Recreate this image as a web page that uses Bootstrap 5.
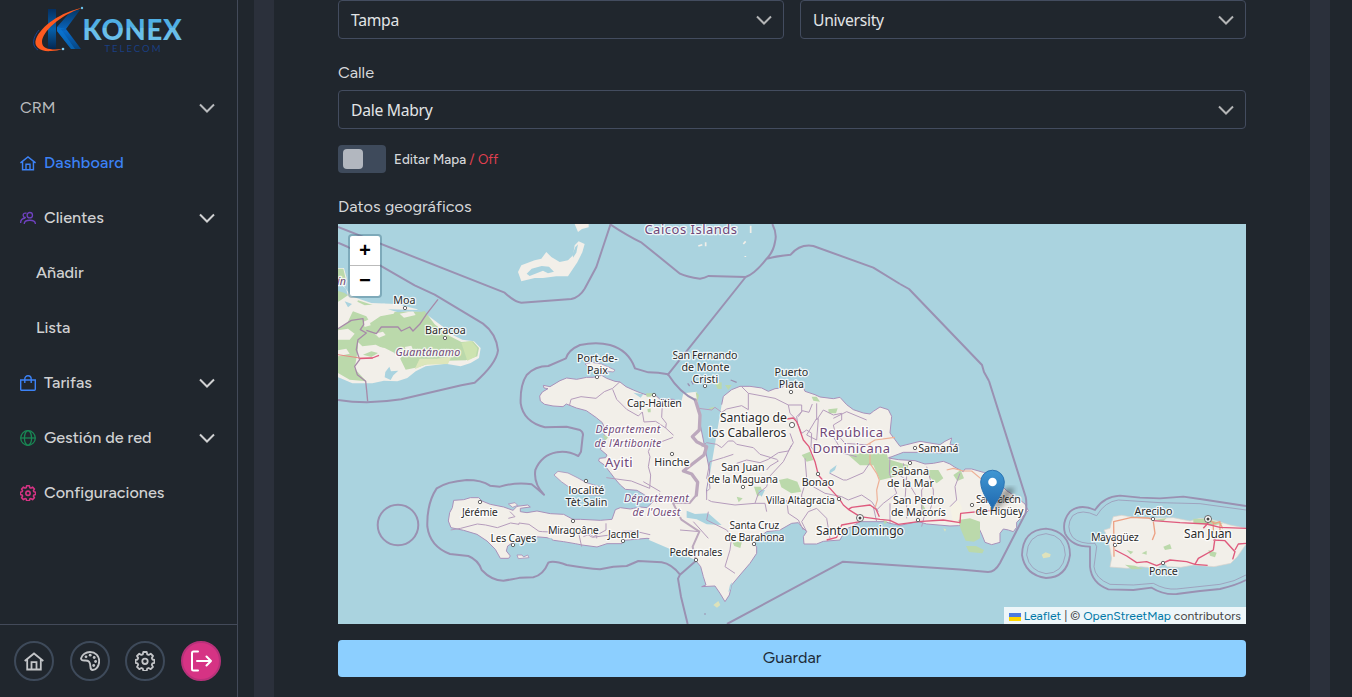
<!DOCTYPE html>
<html lang="es" data-bs-theme="dark">
<head>
<meta charset="utf-8">
<meta name="viewport" content="width=device-width, initial-scale=1">
<title>Konex Telecom</title>
<link href="https://cdn.jsdelivr.net/npm/bootstrap@5.3.0/dist/css/bootstrap.min.css" rel="stylesheet">
<style>
body{background:#20262d;color:#d5d7da;font-family:Figtree,Inter,sans-serif;font-size:16px;height:697px;overflow:hidden}
.side{width:238px;border-right:1px solid #434a59}
.brand-box{height:80px}
.side .nav-link{height:55px;padding:1px 22px 0 20px;color:#d0d1d2;font-weight:500;gap:8px;font-size:16.2px}
.side .nav-link svg{margin-top:-1px}
.side .nav-link.active{color:#3c82f6;letter-spacing:.16px}
.side .sub{padding-left:36px}
.side .title-link{font-weight:400;color:#b9bbbe}
.chev{width:16px;height:10px}
.foot{height:73px;border-top:1px solid #434a59;padding:0 16px 0 14px}
.rbtn{width:40px;height:40px;border:2px solid #3e4a5a;color:#c3c5c8}
.rbtn.out{background:#d63384;border-color:#b8317a;color:#fff}
.gutter{background:#2b303b;width:20px}
.panel{width:1036px;padding:0 64px}
.fsel{height:39px;background:transparent;border:1px solid #434c5f;border-radius:4px;padding:0 11px 0 12px;font:15.7px "Noto Sans",sans-serif;color:#e2e4e6;letter-spacing:-.3px}
.flabel{line-height:24px;height:24px;font-size:16.3px;margin-top:22px;margin-bottom:5px}
.tog{width:48px;height:28px;border-radius:4px;background:#3e4a5b;padding:4px 5px}
.tog span{display:block;width:20px;height:20px;border-radius:4px;background:#b2b7bf}
.togtxt{font-size:13.4px;font-weight:500;padding-top:1px}
.off{color:#e04050;font-weight:400}
.map{height:400px;background:#aad3df;position:relative;overflow:hidden}
.zoomer{position:absolute;left:10px;top:10px;border:2px solid rgba(60,110,130,.4);background-clip:padding-box!important;border-radius:4px;background:#fff;color:#000;width:34px;height:64px;font:bold 20px/32px "Liberation Mono",monospace;text-align:center}
.zoomer div{height:30px}.zoomer div:first-child{border-bottom:1px solid #bbb}
.attr{position:absolute;right:0;bottom:0;height:17px;line-height:17px;background:rgba(255,255,255,.8);padding:0 5px;font-size:12.15px;color:#444;white-space:nowrap}
.attr span{color:#0078a8}
.attr svg{margin-right:3px}
.save{height:37px;background:#8ccfff;border-radius:4px;color:#1d2b38;font-size:16.2px}
.lb text{font-family:"Noto Sans",sans-serif;font-size:10.7px;fill:#2b2b2b;stroke:#fff;stroke-opacity:.8;stroke-width:2.6px;paint-order:stroke;stroke-linejoin:round;text-anchor:middle}
.lb .md{font-size:12.2px}.lb .st{fill:#714b78;font-style:italic}.lb .ct{fill:#6f4878;font-size:13px;letter-spacing:.3px}
</style>
</head>
<body>
<div class="d-flex h-100">
<aside class="side d-flex flex-column flex-shrink-0">
  <div class="brand-box flex-shrink-0">
    <svg width="237" height="80" viewBox="0 0 237 80">
      <defs>
        <linearGradient id="ka" x1="0" y1="0" x2="0" y2="1"><stop offset="0" stop-color="#052f60"/><stop offset=".5" stop-color="#0761aa"/><stop offset="1" stop-color="#05264f"/></linearGradient>
        <linearGradient id="kb" x1="0" y1="0" x2="0" y2="1"><stop offset="0" stop-color="#063765"/><stop offset=".55" stop-color="#0969c6"/><stop offset="1" stop-color="#064682"/></linearGradient>
        <linearGradient id="kc" x1="0" y1="0" x2="0" y2="1"><stop offset=".5" stop-color="#50afe4"/><stop offset=".5" stop-color="#69bfe9"/></linearGradient>
      </defs>
      <path d="M48 9h8v40h-8z" fill="url(#ka)"/>
      <path d="M72 10h8L66 29l15 20H71L57 31v-4z" fill="url(#kb)"/>
      <path d="M66 29 57 27v4l14 18h4L61 29z" fill="#0a7bd8" opacity=".5"/>
      <path d="M82 8C61 12 41 26 36 39c-3 8 5 13 15 12 4 0 8-1 12-2-10 1-21 1-21-7 0-10 18-27 40-34z" fill="#ff5a20"/>
      <path d="M39 30c-6 7-8 16-1 20" fill="none" stroke="#164393"/>
      <circle cx="82" cy="8" r="1.2" fill="#69bfe9"/><circle cx="63" cy="49" r="1.3" fill="#7fd0f5"/>
      <text x="82.500" y="39.500" textLength="100" lengthAdjust="spacingAndGlyphs" font-family="Lato" font-weight="900" font-size="28" letter-spacing=".8" fill="url(#kc)">KONEX</text>
      <text x="104.500" y="52" textLength="56" font-family="Lato" font-size="9.500" fill="#1a3f82">TELECOM</text>
    </svg>
  </div>
  <nav class="nav flex-column flex-nowrap flex-grow-1">
    <a class="nav-link title-link d-flex align-items-center">CRM<svg class="chev ms-auto" viewBox="0 0 16 10" fill="none" stroke="currentColor" stroke-width="2"><path d="m1 1.500 7 7 7-7"/></svg></a>
    <a class="nav-link active d-flex align-items-center"><svg width="16" height="16" viewBox="0 0 20 20" fill="none" stroke="currentColor" stroke-width="1.800"><path d="M.5 9.800 10 2.300l9.500 7.500M3.200 8v10.500h13.600V8M7.500 18.500v-7h5v7"/></svg>Dashboard</a>
    <a class="nav-link d-flex align-items-center"><svg width="16" height="16" viewBox="0 0 16 16" fill="none" stroke="#6f42c1" stroke-width="1.300"><circle cx="9.800" cy="5.200" r="2.700"/><path d="M4.200 14c0-5 11.200-5 11.200 0M6.500 3.400a2.200 2.200 0 1 0-.6 4M.6 13c0-3 1.400-4.600 4.600-5"/></svg>Clientes<svg class="chev ms-auto" viewBox="0 0 16 10" fill="none" stroke="currentColor" stroke-width="2"><path d="m1 1.500 7 7 7-7"/></svg></a>
    <a class="nav-link sub d-flex align-items-center">Añadir</a>
    <a class="nav-link sub d-flex align-items-center">Lista</a>
    <a class="nav-link d-flex align-items-center"><svg width="16" height="16" viewBox="0 0 16 16" fill="none" stroke="#3c82f6" stroke-width="1.400"><path d="M.7 5h14.600v9.200q0 1.100-1 1.100H1.700q-1 0-1-1.100zM4.800 8V4a3.200 3.200 0 0 1 6.400 0v4"/></svg>Tarifas<svg class="chev ms-auto" viewBox="0 0 16 10" fill="none" stroke="currentColor" stroke-width="2"><path d="m1 1.500 7 7 7-7"/></svg></a>
    <a class="nav-link d-flex align-items-center"><svg width="16" height="16" viewBox="0 0 16 16" fill="none" stroke="#198754" stroke-width="1.300"><circle cx="8" cy="8" r="7.300"/><ellipse cx="8" cy="8" rx="3.600" ry="7.300"/><path d="M.7 8h14.600"/></svg>Gestión de red<svg class="chev ms-auto" viewBox="0 0 16 10" fill="none" stroke="currentColor" stroke-width="2"><path d="m1 1.500 7 7 7-7"/></svg></a>
    <a class="nav-link d-flex align-items-center"><svg width="16" height="16" viewBox="0 0 20 20" fill="none" stroke="#d63384" stroke-width="2"><path id="gear" stroke-linejoin="round" d="M8.300 1h3.400l.5 2.300 1.500.6 2-1.200 2.300 2.300-1.200 2 .6 1.500 2.100.5v2.800l-2.100.6-.6 1.500 1.200 2-2.300 2.300-2-1.200-1.500.6-.5 2.200H8.300l-.5-2.200-1.500-.6-2 1.200L2 15.900l1.200-2-.6-1.500-2.100-.6V9l2.100-.5L3.200 7 2 5l2.300-2.300 2 1.200 1.500-.6z"/><circle cx="10" cy="10.300" r="2.700"/></svg>Configuraciones</a>
  </nav>
  <div class="foot d-flex align-items-center justify-content-between">
    <span class="rbtn rounded-circle d-flex align-items-center justify-content-center"><svg width="20" height="20" viewBox="0 0 20 20" fill="none" stroke="currentColor" stroke-width="1.800"><path d="M.7 10 10 2.500l9.300 7.500M3.200 8.500v10h13.600v-10M7.500 18.500v-7.300h5v7.300"/></svg></span>
    <span class="rbtn rounded-circle d-flex align-items-center justify-content-center"><svg width="20" height="20" viewBox="0 0 20 20" fill="none" stroke="currentColor" stroke-width="1.900"><path d="M1 7.500C2 3.500 6 1 10 1c5.500 0 9.200 4 9.200 9 0 5-3 9-6.500 9-4 0-.8-5-3.700-8.300C6.500 7.900 1.500 11.500 1 7.500z"/><g fill="currentColor" stroke="none"><circle cx="6" cy="5.800" r="1.400"/><circle cx="10.200" cy="4.200" r="1.400"/><circle cx="14.200" cy="6.500" r="1.400"/><circle cx="15.600" cy="10.500" r="1.400"/><circle cx="13.700" cy="14.500" r="1.400"/></g></svg></span>
    <span class="rbtn rounded-circle d-flex align-items-center justify-content-center"><svg width="20" height="20" viewBox="0 0 20 20" fill="none" stroke="currentColor" stroke-width="1.800"><use href="#gear"/><circle cx="10" cy="10.300" r="2.700"/></svg></span>
    <span class="rbtn out rounded-circle d-flex align-items-center justify-content-center"><svg width="22" height="22" viewBox="0 0 22 22" fill="none" stroke="currentColor" stroke-width="2" stroke-linecap="round" stroke-linejoin="round"><path d="M8 1.500H3.500q-1.500 0-1.500 1.500v16q0 1.500 1.500 1.500H8M7 11h14m-4.500-4.500L21 11l-4.500 4.500"/></svg></span>
  </div>
</aside>
<main class="d-flex flex-grow-1 ps-3">
  <div class="gutter flex-shrink-0"></div>
  <section class="panel flex-shrink-0">
    <div class="d-flex gap-3">
      <div class="fsel flex-fill w-50 d-flex align-items-center">Tampa<svg class="chev ms-auto" viewBox="0 0 16 10" fill="none" stroke="#b4b5b6" stroke-width="2"><path d="m1 1.500 7 7 7-7"/></svg></div>
      <div class="fsel flex-fill w-50 d-flex align-items-center">University<svg class="chev ms-auto" viewBox="0 0 16 10" fill="none" stroke="#b4b5b6" stroke-width="2"><path d="m1 1.500 7 7 7-7"/></svg></div>
    </div>
    <div class="flabel">Calle</div>
    <div class="fsel d-flex align-items-center">Dale Mabry<svg class="chev ms-auto" viewBox="0 0 16 10" fill="none" stroke="#b4b5b6" stroke-width="2"><path d="m1 1.500 7 7 7-7"/></svg></div>
    <div class="d-flex align-items-center gap-2 mt-3"><div class="tog"><span></span></div><div class="togtxt">Editar Mapa <span class="off">/ Off</span></div></div>
    <div class="flabel">Datos geográficos</div>
    <div class="map">
<svg class="d-block" width="908" height="400" viewBox="338 224 908 400" fill="none" stroke-linejoin="round">
<defs><linearGradient id="pin" x1="0" y1="0" x2="0" y2="1"><stop offset="0" stop-color="#3f97d3"/><stop offset="1" stop-color="#2068ae"/></linearGradient><filter id="soft"><feGaussianBlur stdDeviation="2.500"/></filter></defs>
<!-- eastern Cuba and Inagua -->
<g transform="translate(338 222) scale(.33333)">
 <path fill="#f2efe9" d="M0 138l18 0 8 30-8 25 22 30 60 20 75 3 60 15 38 22 40 30 30 25 30 15 35 5 20 20-5 30-25 15-30 10-45-8-60 8-30 15-25 20-30 10-40-2-35 8-60 0-35-15-38-15z"/>
 <path fill="#bbd9ab" d="M0 140l16 0 8 35-14 20 20 25-30 20zM60 235l110 35 90-3 30 40 45 35 35 18 35-2 18 20-5 25-35 12-90 2-50 18-40 8-20-40-70-35-40 5-20-20-55 10 0-40 30-20zM0 330l60 0 0 50-10 60 35 38-50-5-35-20z"/>
 <path fill="#cde3b0" d="M370 362l30-5 18 22-5 25-25 12z"/>
 <g fill="#f2efe9"><path d="M0 240l35-12 45 22 60-5 35 15-8 15-40 8-30 20-12-20-40-15-45 15zM75 300l18-8 5 18-18 5zM0 325l30-5 20 15-15 18-35 0zM185 275l40-8 8 12-35 8zM170 395l22-10 5 14-20 20zM110 335l25-6 8 10-20 8zM0 385l25-5 10 15-35 8zM200 375l20-4 4 9-20 4z"/><path d="M65 385l45-12 30 5 30 15-12 40-20 20-30 5-35-10-12-25z"/></g>
 <path fill="#dde6bb" d="M245 410l50 0 45-6-10 22-70 2-30 14z"/>
 <path fill="#bbd9ab" d="M75 398l25-10 20 5-20 12z"/>
 <path fill="#aad3df" d="M142 450l12-16 5 14 22-2-15 14-8 14-18-8zM0 180l24 20 6 20-12-8-18-5zM20 238l22 8-12 10zM150 262l90 2 20 6-50-2-30 3z"/>
 <path stroke="#a78aa8" stroke-width="4" d="M0 320l40-25 35-5 2 18-10 15 18 10-25 20-5 30 10 30-15 20 8 25 25 20 3 28 3 32M85 325l30 10 15-20 50 0 10 12 25-12 10 12 20-20 20-30 35-45"/>
 <path stroke="#e78b85" stroke-width="3" d="M0 398l65 10 40 0"/><path stroke="#df5a7d" stroke-width="4" d="M65 410l38-2 20-8"/>
 <path fill="#f2efe9" d="M540 150l10-20 40-15 20-5 15-20 15 15 25 15 25-5 15-15 5-30 12-12 18 8-7 25-15 30-28 42-35 0-40 5-25 0-40 10zM710 6l42 0 0 10-20 5-12 9z"/>
 <path fill="#aad3df" d="M566 155l15-15 30-8 22 2 15 15-18 5-15-8-40 16zM704 95l8-20 8-8-5 25-10 15z"/>
 <g stroke="#9a91b2" stroke-width="6"><path d="M0 15l500 197Q530 240 550 242l150-11Q725 225 740 200l35-65 15-45 28-84M0 62l30 13 200 115 60 28 145 87Q475 335 480 385 475 425 410 482l-40 8-180 42Q90 548 0 534"/></g>
</g>
<g transform="translate(600 222) scale(.33333)"><path stroke="#f2efe9" stroke-width="5" d="M295 72l12-4m10 5l0-12m113 5l7-8m15-25l0-22m-103 5l10-3m77 92l0-3"/></g>
<!-- Haiti -->
<g transform="translate(420 340) scale(.33333)">
 <path fill="#f2efe9" stroke="#a991ba" stroke-width="3" d="M826 182l-26-4-15 17-25-17-40 0-14-13-26 0-20-7-20-8-22-10-18-14-15-2-25-9-15-9-25 6-20 0-30 6-30-4-20 8-30 18-20-4 2 8 12 2-17 10-8 12 2 15 13 10 25 5 30 2 10-8 10 4 20 8 30 8 30 21 18 15 8 20-3 15 7 10-10 15-8 20 20 17-4 8-19 2-2 8 17 12 18 23 15 20 15 17 15 13 35 3 20 12 20 15 10 5-20 20-20-2-20 4-10 2-30-4-15 6-10 29-35 3-40-2-20-1-22 0-28-15-40-2-40-8-30 5-20-3 0-10 30-4-8-6-32 4-12 12-28-10-40-8-25-10-10-10-25 0-20 6-30 2-4 22-8 15-4 25 8 20 38 8 40 12 30 20 25 25 15 27 25 0 5-7-12-15 4-15 23-15 25-10 35-3 35 3 20 8 30 4 35 6 20 4 45 6 30-10 45 0 5-10 70-6 60 6 40 14 48 28 40-250z"/>
 <path fill="#f2efe9" stroke="#a991ba" stroke-width="2.500" d="M402 405l12-11 30 5 30 15 25 14 40 12 0 25-30 0-50-15-35-25zM495 72l20-5 30 5 40 18-5 6-40-5-35-10zM265 492l20-4 8 8-15 6zM291 645l15 0 5 6 12-6 4 8-32 3z"/>
 <g stroke="#b59cbc" stroke-width="3"><path d="M448 198l5-20 30-8 45 5 25-20 25-10 22-20M578 148l12 30 30 30 35 20 12-12 5 30 35-2 30 20M735 180l-8 12-2 40 14 18-2 14 28 26-40 15-30 5-10 25 5 15-5 30 7 25-3 40-55-22-75-10M765 290l60 15M670 425l60 35 60-2 35 25M92 570l30-5 50-13 25 3 35 8 40-14 25 4 0-4 30 4 30 21 10 1 130 5 20 12 60-8 30-10 40 0 60 14 40-5 60 3M270 515l15 15-20 5M475 575l10 45M490 590l20-8 10 8 20-10 18-10 0-20M530 565l0 30M720 460l-10 30"/></g>
 <path fill="#aad3df" d="M748 412l15-3 5 10 22-5-10 12-20-5zM375 608l8-12 14-2-5 12zM738 490l20 0 20 12-20 3zM640 158l30 5-8 10z"/>
 <path fill="#bbd9ab" d="M678 160l22 0-8 10-12 0zM548 285l18 5-10 12zM800 555l22-5 0 12-12 4zM682 208l10-3 0 12-8 0z"/>
</g>
<!-- Dominican Republic -->
<g transform="translate(660 340) scale(.33333)">
 <path fill="#f2efe9" stroke="none" d="M70 160l40-5 35 380-38 125-140-60z"/>
 <path fill="#f2efe9" stroke="#a991ba" stroke-width="3" d="M106 660l16 20 8 30 8 25-13 5 40-2 15 22 15 25 13-20 7-30 25-30 30-35 20-30 0-20-10-8 20-22 20-15 40-5 35-20 20-2 10 12 15 15-10 15 2 22 38 0 20-8 50-4 8-15 4-15 23-10 25-15 75 0 15 5 30 6 55-11 25 7 70 6 25-1 35-2 20 2 8 10 7 15 10 25 20 7 25-7 0-27 10-13 15 3 15 5 10-13 0-15 15-15 20-20-10-20-25-20-30-20-20-20-20-25-30-10-35-10-20 0-5 8-25-13-15-10-20-8-30 6-25 2-30-10-50-3-30-5 45-17 80 0 35 2 15-5 20-5 15-15-25 0 5-20-20 10-15 10-60-10-60 15-15-20-15-20 5-50-10-20-25-8-20 13-10 8-20-3-30-10-20-15-20-22-20 4-40-5-15-7-30-10-5-12-35-10-20 0-10 12-20 2-20 8-20-10-35-5-30 0-25 10-25 20-5 25"/>
 <path fill="#f5f2e5" d="M870 500l25-20 10 20 5 50-30 0z"/>
 <g fill="#bbd9ab"><path d="M565 345l35-5 80 0 5 18 60 18-5 20-40 15-40 10-20-45-40 0zM357 420l25-5 30 10 12 30-30 5-30-18zM425 345l25-10 10 25-20 5zM165 130l20-3 0 20-12 0zM195 135l20 0-10 15zM455 170l15 0 10 15-20-3zM505 208l28-3-5 15-22 0zM282 440l20 0 8 20-18 10zM218 608l28-4-5 20-18-6zM805 390l30 0 15 25-20 15-22-20zM880 405l22-15 10 25-20 8zM895 540l35-5 30 10 0 50-18 10-25-3-15-35zM918 618l30 0 24 12-5 10-40-4zM230 470l18 5-12 12zM107 155l10 10-5 22zM780 480l18 30-10 10zM670 540l12 5-8 8zM145 205l18-5-5 10z"/></g>
 <path fill="#aad3df" d="M80 512l25 10 40-2 40 35-45-2-30-15-30-5zM510 390l20-15-5 15-18 12zM295 450l20 0-10 20-8-8zM210 735l6-8-3 20-8 10z"/>
 <path fill="#dde2ba" d="M160 795l15-12 6 12-10 8zM850 565l8 3-3 7z"/><path stroke="#9a8faf" stroke-width="4" d="M133 822l4 0M83 130l6 8m5-15l6 10m112-13l18 7"/>
 <g stroke="#b59cbc" stroke-width="3"><path d="M115 205l40 5 10-8 20 15 15-10 45-10 20 12 0-49M245 140l20 20 80 15 40 20 40 0 0 20-15 15 3 20 12 30 15-10 15 10-2 40 15 20M125 320l15-12 30 5 15 10 20-20 15 0 10 10 50 10 20 20 50 15 5 5-25 15-10 12M140 480l0-25 10-10-2-20-8-10 10-50 40-12 30-10M145 480l10 5 70 10 60-5 30 0 5 25M230 370l30-10 40 8 25-10 30-20 30-5 15-25-10-28M285 490l10-30 25-20 8-30 42-45 25-50M385 195l5 25 20 20M415 230l12-18 20 5 10-25M470 190l0 50 20-30 30 15 25-5M470 235l-30 50 30 15 5-65M545 220l0 20-25 15 5 20 30 35 70 5M435 355l5 60 0 25M440 415l-15 50 0 12M460 440l35 20 50 10 20 10 40-15 30 20 20 30M510 400l40 20 10 0 50-22 20-30M520 290l30 50 40 10M690 350l-2 50 22 60-40 30-20 20M730 370l10 40-5 70 5 15 0 40M710 400l30 20 30 50M820 480l-10 30-15 10-10 40M800 380l20 70 0 30M900 400l-15 40 5 40-20 20M145 515l-5 25 60 30 15 20-5 40-15 50 30 20M100 545l45 50M380 480l5 40 30 20 15 30M470 505l-25 10-20 30 15 30M470 505l30 30 10 60M420 475l30 30M60 570l60 5M785 520l0-70 20-30M620 240l-60-25-40 20M640 500l10 45M690 490l0 60"/></g>
 <g stroke="#bca8bd" stroke-linecap="round"><path stroke-width="10" d="M106 180l14 45-2 45-21 20 13 15 30 15-8 25-62 48 25 9 18 25-4 38"/><path stroke-width="6" d="M109 465l-20 24-50 0 10 20 15 30 54 36-20 45 8 35"/></g>
 <g stroke="#eeb096" stroke-width="3.500"><path d="M630 310l0 60 20 30 8 20-8 30 2 30-7 25M620 315l25-15 60-8M860 390l20-5 30 8 25 0 30 25 18 40"/></g>
 <g stroke="#df5a7d" stroke-width="4"><path d="M380 237L400 234 410 245 415 257 430 300 447 320 465 365 475 405 505 440 537 475 550 495 565 508 600 530 660 538 690 541 715 553 775 545 850 540 900 548 902 520 1005 510M565 508L575 502 630 495 648 508 658 530M500 600L530 592 545 555 600 545"/></g>
</g>
<!-- Puerto Rico, Mona -->
<g transform="translate(880 400) scale(.33333)">
 <path fill="#f2efe9" stroke="#ddd3cc" stroke-width="2" d="M700 350l25-4 35 6 40 3 80-2 50 10 30-8 40 5 50 15 50 10 0 45-28 40-20 20-50 10-60-5-40 7-40-2-10-10-20 15-50-5-40 5-52-4 5-26-5-30-10-40-8-15 18-5 5-20z"/>
 <path fill="#bbd9ab" d="M735 494l30 3 25 10-35 1zM850 440l20-8 5 14-20 4zM985 450l25 8-5 14-15-5zM940 356l40 0 50 15-30 5-60-8zM740 450l20 5-8 8zM820 360l40-6-10 10zM785 460l15-8 0 12z"/><path fill="#dfe2bb" d="M485 464l12-7 15 6-2 8-20 4z"/>
 <path stroke="#eda184" stroke-width="4" d="M702 470L701 365 730 358 755 352 805 354 820 359M820 365l5 35-8 20M985 360l20 10 15-5 0 30M1000 365l0 35M1018 365l10 20"/>
 <path stroke="#df5a7d" stroke-width="4.200" d="M820 362L900 368 980 372 1020 382 1098 385M970 385l15-17M705 450L740 468 770 488 800 485 830 497 870 480 920 485 945 493 983 496M945 493L955 475 1000 450 1005 415M1000 420L1035 422 1065 455 1058 478M1065 450L1075 432 1098 430"/>
 <g stroke="#9a91b2" stroke-width="5.500"><path d="M1098 318L960 297 910 290 840 295 780 293 720 287Q670 290 645 330 600 310 570 335 545 365 555 400 575 440 630 440V500Q635 550 685 568L760 570 815 563Q850 585 890 582L960 573 1020 567Q1070 555 1098 540"/><path d="M498 386Q570 395 570 465 560 533 498 534 435 525 426 465 428 390 498 386z"/><path stroke-width="2.200" d="M1098 330L960 311 840 308 715 300Q675 305 650 347 605 325 578 347 555 380 578 412 600 433 645 430L650 440 642 500Q645 535 690 553L760 555 820 550Q855 570 890 567L1020 553Q1065 545 1098 525"/><path stroke-width="2.200" d="M498 401Q555 407 556 465 548 520 498 521 448 513 440 465 442 405 498 401z"/></g>
</g>
<!-- maritime limits -->
<g stroke="#9a91b2" stroke-width="2">
 <g transform="translate(600 222) scale(.33333)" stroke-width="6"><path d="M32 8Q80 40 125 62L240 155Q260 165 300 170 315 168 325 162L437 165Q465 155 500 110 520 90 525 60 532 35 517 6M500 110Q530 102 572 98 600 65 640 72L820 137 900 186M437 165L202 460"/></g>
 <path d="M900 284l9 5 73 76 2 7 5 9"/>
 <path d="M989 381L995 400 1025.700 497Q1027 503 1025.700 513L1000 563Q995 572 988 572L960 569.500 843 561.700 727 624"/>
 <circle cx="398" cy="525" r="20.300"/>
 <g transform="translate(420 340) scale(.33333)" stroke-width="6"><path d="M826 180Q780 160 744 103 715 97 685 97L645 85Q625 30 570 15 530 5 480 15 445 30 438 55L385 78Q345 78 320 105 300 135 302 190 310 245 375 262L440 260 480 270Q492 278 488 290L483 335 475 348Q440 330 410 337 365 345 346 390 340 430 372 464 350 445 335 433 290 425 240 440L210 437Q185 420 140 420 80 425 50 445 20 490 22 560 30 620 90 642L145 648Q175 660 185 690 215 722 250 722 290 716 300 713L340 712Q370 705 385 668 400 660 440 675 500 685 540 688L580 680 620 678 655 663 725 667Q755 672 780 704L828 662M780 704l-6 12 9 54 20 82"/></g>
</g>
<g fill="#fff" stroke="#555" stroke-width=".9"><circle cx="405" cy="308" r="1.700"/><circle cx="445" cy="338" r="1.700"/><circle cx="597" cy="377" r="1.700"/><circle cx="654" cy="395" r="1.700"/><circle cx="705" cy="386" r="1.700"/><circle cx="791" cy="392" r="1.700"/><circle cx="792" cy="425" r="2.600"/><circle cx="672" cy="454" r="1.700"/><circle cx="586" cy="481" r="1.700"/><circle cx="480" cy="502" r="1.700"/><circle cx="573" cy="521" r="1.700"/><circle cx="513" cy="545" r="1.700"/><circle cx="623" cy="541" r="1.700"/><circle cx="696" cy="560" r="1.700"/><circle cx="754" cy="544" r="1.700"/><circle cx="743" cy="487" r="1.700"/><circle cx="818" cy="474" r="1.700"/><circle cx="839" cy="499" r="1.700"/><circle cx="915" cy="448" r="1.700"/><circle cx="910" cy="463" r="1.700"/><circle cx="918" cy="520" r="1.700"/><circle cx="972" cy="505" r="1.700"/><circle cx="1153" cy="519" r="1.700"/><circle cx="1115" cy="545" r="1.700"/><circle cx="1163" cy="563" r="1.700"/><circle cx="860" cy="518" r="3.500"/><circle cx="1208" cy="519" r="3.500"/></g>
<g fill="#444"><circle cx="860" cy="518" r="1.500"/><circle cx="1208" cy="519" r="1.500"/></g>
<g class="lb" transform="translate(.4 0)">
<text x="404" y="304">Moa</text><text x="445" y="334">Baracoa</text><text class="st" x="427.500" y="355.500" textLength="65">Guantánamo</text><text class="st" x="341" y="285">ín</text>
<text class="ct" x="690.500" y="233.500" textLength="93">Caicos Islands</text>
<text x="597" y="361.500">Port-de-</text><text x="597" y="373.500">Paix</text><text x="654" y="406.500" textLength="55">Cap-Haïtien</text>
<text x="704.500" y="358.500" textLength="65">San Fernando</text><text x="705" y="370.500">de Monte</text><text x="705" y="382.500">Cristi</text>
<text x="791" y="376">Puerto</text><text x="791" y="388">Plata</text>
<text class="md" x="753" y="421.500" textLength="67">Santiago de</text><text class="md" x="747" y="437" textLength="78">los Caballeros</text>
<text class="ct" x="851" y="436.500" textLength="64">República</text><text class="ct" x="851" y="453" textLength="78">Dominicana</text>
<text x="938" y="452">Samaná</text><text x="910" y="474.500">Sabana</text><text x="910" y="486.500">de la Mar</text>
<text x="918" y="504">San Pedro</text><text x="918" y="516">de Macorís</text><text x="998" y="503" textLength="45">San Raleón</text><text x="999" y="515" textLength="48">de Higüey</text>
<text x="742.500" y="471">San Juan</text><text x="742.500" y="483" textLength="70">de la Maguana</text><text x="817.500" y="485.500">Bonao</text><text x="800" y="503.500" textLength="69">Villa Altagracia</text>
<text x="754" y="528.500" textLength="50">Santa Cruz</text><text x="754" y="540.500" textLength="60">de Barahona</text><text class="md" x="859.500" y="534.500" textLength="88">Santo Domingo</text><text x="695.500" y="556" textLength="53">Pedernales</text>
<text class="st" x="627.500" y="433" textLength="65">Département</text><text class="st" x="627.500" y="446.500" textLength="67">de l'Artibonite</text><text class="ct" x="618.500" y="467">Ayiti</text><text x="671.500" y="465.500">Hinche</text>
<text class="st" x="656" y="502" textLength="65">Département</text><text class="st" x="656" y="515.500" textLength="48">de l'Ouest</text>
<text x="586" y="493.500">localité</text><text x="586" y="505.500">Tèt Salin</text><text x="479.500" y="515.500" textLength="36">Jérémie</text><text x="573" y="533.500" textLength="51">Miragoâne</text><text x="513" y="542" textLength="46">Les Cayes</text><text x="623" y="538" textLength="31">Jacmel</text>
<text x="1153" y="515">Arecibo</text><text class="md" x="1207.500" y="537.500" textLength="48">San Juan</text><text x="1114.500" y="541" textLength="48">Mayagüez</text><text x="1163" y="574.500" textLength="29">Ponce</text>
</g>
<path d="M992 510l5-12 9-10h9l-5 10-10 9z" fill="#000" opacity=".35" filter="url(#soft)"/>
<path d="M992.500 509.500c-1.500-6-11.800-16-11.800-27.500a11.800 11.800 0 0 1 23.600 0c0 11.500-10.300 21.500-11.800 27.500z" fill="url(#pin)" stroke="#2b74b3"/><circle cx="992.500" cy="482" r="4.300" fill="#fff"/>
</svg>
      <div class="zoomer"><div>+</div><div>−</div></div>
      <div class="attr"><svg width="12" height="8"><path fill="#4c7be1" d="M0 0h12v4H0z"/><path fill="#ffd500" d="M0 4h12v4H0z"/></svg><span>Leaflet</span> | © <span>OpenStreetMap</span> contributors</div>
    </div>
    <div class="save mt-3 d-flex align-items-center justify-content-center">Guardar</div>
  </section>
  <div class="gutter flex-shrink-0"></div>
</main>
</div>
<script src="https://cdn.jsdelivr.net/npm/bootstrap@5.3.0/dist/js/bootstrap.bundle.min.js"></script>
</body>
</html>
